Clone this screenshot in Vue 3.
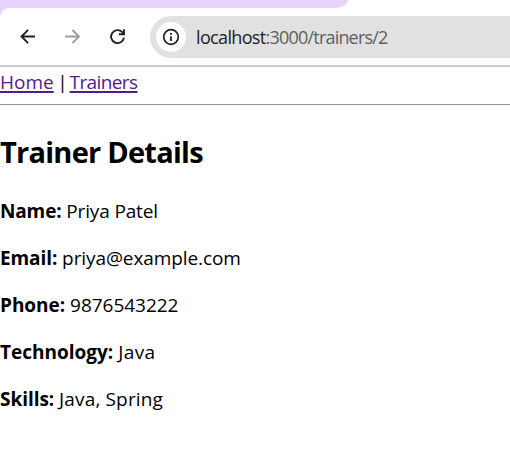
<script setup>
const fields = [
  { key: 'name', label: 'Name', value: 'Priya Patel' },
  { key: 'email', label: 'Email', value: 'priya@example.com' },
  { key: 'phone', label: 'Phone', value: '9876543222' },
  { key: 'technology', label: 'Technology', value: 'Java' },
  { key: 'skills', label: 'Skills', value: 'Java, Spring' },
]
</script>

<template>
  <div class="window">
    <div class="tabstrip"><div class="strip"></div></div>
    <header class="toolbar">
      <div class="buttons">
        <svg class="icon" width="20" height="20" viewBox="0 0 20 20">
          <path d="M17 9.5H4M10.1 2.9 3.5 9.5l6.6 6.6" />
        </svg>
        <svg class="icon muted" width="20" height="20" viewBox="0 0 20 20">
          <path d="M2 9.5H15.5M9.4 2.9 16 9.5l-6.6 6.6" />
        </svg>
        <svg class="icon" width="20" height="20" viewBox="0 0 20 20">
          <path d="M16 10.7A6.5 6.5 0 1 1 14.3 5.1L16 6.8M16 2.2V7.3H10.8" />
        </svg>
      </div>
      <div class="address">
        <span class="info">
          <svg width="18" height="18" viewBox="0 0 18 18">
            <circle cx="9" cy="9" r="7.3" fill="none" stroke="#202124" stroke-width="1.7" />
            <path d="M9 8.2V13M9 5V6.8" stroke="#202124" stroke-width="1.8" />
          </svg>
        </span>
        <span class="url"><span class="host">localhost</span>:3000/trainers/2</span>
      </div>
    </header>
    <main class="page">
      <nav><a class="home">Home</a><span class="divider"> | </span><a class="trainers">Trainers</a></nav>
      <div class="rule"></div>
      <h2>Trainer Details</h2>
      <p v-for="f in fields" :key="f.key" :class="f.key"><strong>{{ f.label }}:</strong> <span>{{ f.value }}</span></p>
    </main>
  </div>
</template>

<style>
body { background: #fff; }
</style>

<style scoped>
.window {
  height: 457px;
  overflow: hidden;
  background: #fff;
  color: #000;
  font: 19px/27px "Open Sans", "Noto Sans", sans-serif;
}
.tabstrip {
  height: 8px;
  background: #fff;
}
.strip {
  width: 348px;
  height: 8px;
  background: #e8d3ff;
  border-bottom-right-radius: 14px 8px;
}
.toolbar {
  display: flex;
  align-items: center;
  height: 57px;
  border-bottom: 2px solid #cbcbcb;
  background: radial-gradient(circle at 10px 10px, #fff 9.5px, #e8d3ff 10.5px) 0 0 / 10px 10px no-repeat;
}
.buttons {
  display: flex;
  gap: 25px;
  width: 132px;
  padding-left: 18px;
}
.icon {
  fill: none;
  stroke: #202124;
  stroke-width: 1.9;
}
.muted { stroke: #9c9c9c; }
.address {
  display: flex;
  align-items: center;
  flex: 1;
  height: 42px;
  padding-left: 6px;
  border-radius: 21px 0 0 21px;
  background: #e1e1e1;
}
.info {
  display: flex;
  align-items: center;
  justify-content: center;
  width: 30px;
  height: 30px;
  border-radius: 50%;
  background: #fff;
}
.url {
  padding: 2px 0 0 10px;
  color: #5f6061;
  font-size: 18px;
  letter-spacing: -0.8px;
  white-space: nowrap;
}
.host {
  color: #202124;
  letter-spacing: -0.65px;
}
.page { padding-top: 2px; }
nav {
  height: 27px;
  white-space: pre;
}
a {
  color: #551a8b;
  text-decoration: underline;
  text-underline-offset: 2px;
  text-decoration-thickness: 2px;
}
.divider {
  letter-spacing: -0.5px;
  word-spacing: -1px;
}
.trainers {
  margin-left: -1px;
  letter-spacing: -0.6px;
}
.rule {
  height: 1px;
  margin-top: 8px;
  border-top: 1px solid #9a9a9a;
  background: #eee;
}
h2 {
  margin: 26px 0 26px;
  font-size: 29px;
  line-height: 40px;
  font-weight: 700;
  letter-spacing: -0.75px;
}
p { margin: 0 0 20px; }
strong { font-weight: 700; }
.name { letter-spacing: -0.15px; }
.email { letter-spacing: -0.09px; }
.phone { letter-spacing: -0.03px; }
.technology span { letter-spacing: 0.4px; }
.skills strong { letter-spacing: -0.05px; }
.skills span { letter-spacing: 0.15px; }
</style>
